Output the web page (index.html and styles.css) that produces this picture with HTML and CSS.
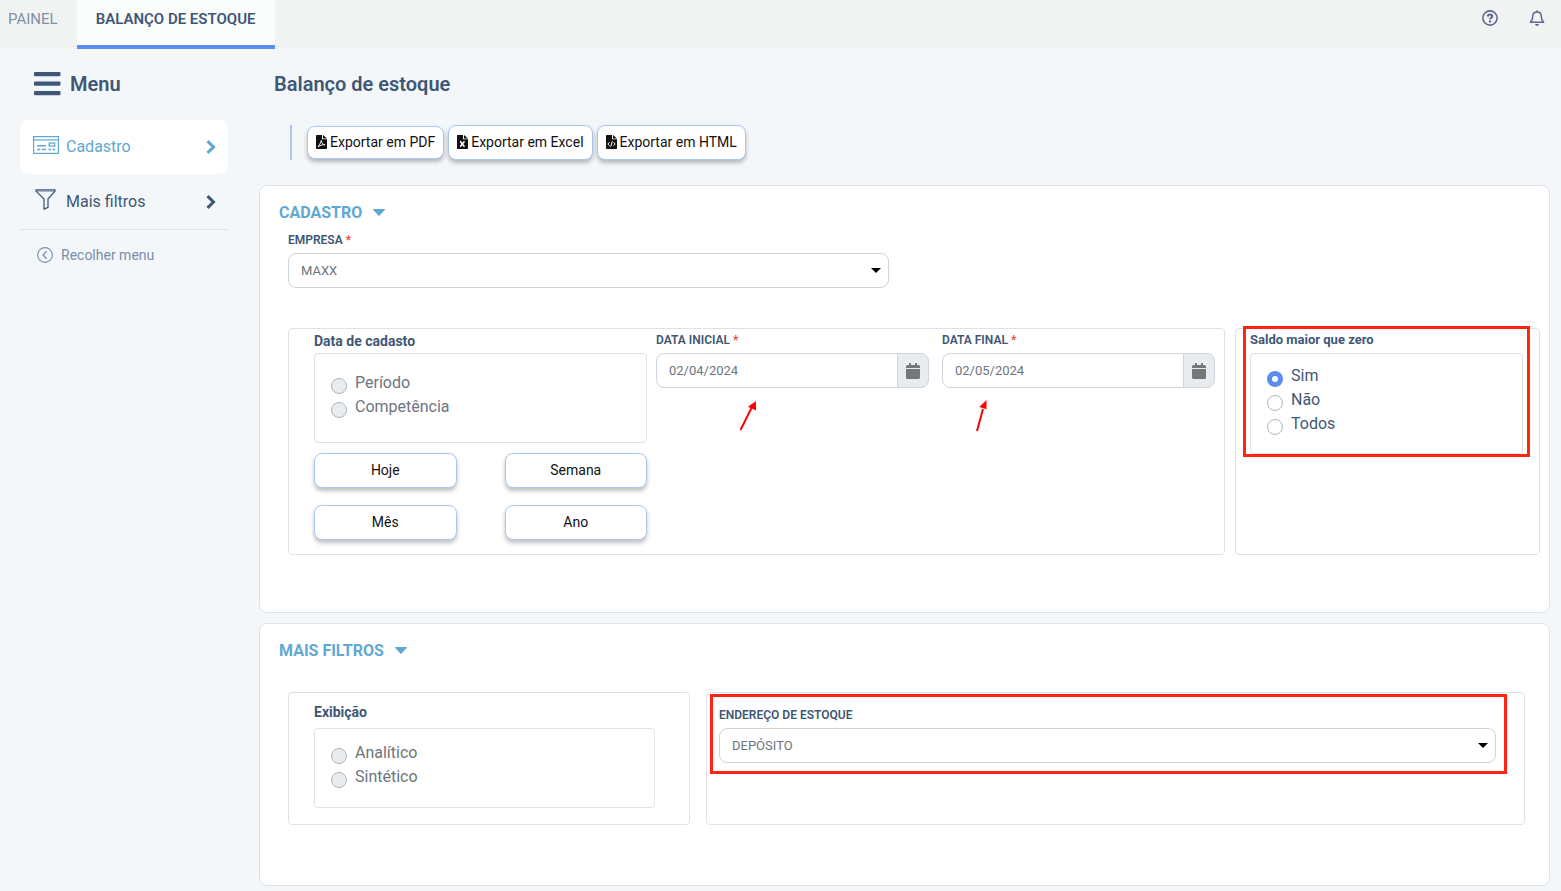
FILE: index.html
```html
<!DOCTYPE html>
<html lang="pt-BR">
<head>
<meta charset="utf-8">
<meta name="viewport" content="width=device-width, initial-scale=1">
<title>Balanço de estoque</title>
<link rel="stylesheet" href="styles.css">
</head>
<body>
<header class="topbar">
  <nav class="tabs">
    <a class="tab" href="#painel">PAINEL</a>
    <a class="tab tab-active" href="#balanco" aria-current="page">BALANÇO DE ESTOQUE</a>
  </nav>
  <div class="top-actions">
    <button class="icon-button" type="button" aria-label="Ajuda">
      <svg width="16" height="16" viewBox="0 0 16 16" fill="none" stroke="currentColor"><circle cx="8" cy="8" r="7.1" stroke-width="1.6"/><path d="M5.700 6.500c.2-1.300 1.100-1.900 2.300-1.900 1.300 0 2.200.7 2.200 1.800 0 1.500-2.100 1.400-2.100 2.900" stroke-width="2"/><circle cx="8.050" cy="11.400" r="1.200" fill="currentColor" stroke="none"/></svg>
    </button>
    <button class="icon-button" type="button" aria-label="Notificações">
      <svg width="16" height="16" viewBox="0 0 16 16" fill="none" stroke="currentColor" stroke-width="1.500" stroke-linejoin="round"><path d="M8 .2v1.600"/><path d="M8 2C5.300 2 3.700 3.900 3.700 6.500c0 3.300-.9 4.500-2.300 5.800h13.200c-1.400-1.300-2.300-2.500-2.300-5.800C12.300 3.900 10.700 2 8 2z"/><path d="M6.100 13.900h3.800c-.1 1.200-.9 2-1.900 2s-1.800-.8-1.900-2z" fill="currentColor" stroke="none"/></svg>
    </button>
  </div>
</header>

<div class="layout">
  <aside class="sidebar">
    <h2 class="menu-title">
      <svg width="27" height="24" viewBox="0 0 27 24" fill="currentColor" aria-hidden="true"><rect y="0" width="26.500" height="4.200" rx="1"/><rect y="9.500" width="26.500" height="4.200" rx="1"/><rect y="19" width="26.500" height="4.200" rx="1"/></svg>
      Menu
    </h2>
    <nav class="side-nav">
      <a class="side-link side-link-active" href="#cadastro">
        <svg class="side-icon" width="26" height="18" viewBox="0 0 26 18" fill="none" stroke="currentColor" aria-hidden="true"><rect x=".6" y=".6" width="24.800" height="16.800" stroke-width="1.200"/><path d="M1 3.900h24" stroke-width="1.200"/><path d="M4 9.700h9M4 13.500h3.500M9 13.500h4M15.500 13.500h2.500M19.500 13.500h2.500" stroke-width="1.400"/><rect x="16.200" y="7" width="5.500" height="3" stroke-width="1.300"/></svg>
        Cadastro
        <svg class="side-arrow" width="10" height="14" viewBox="0 0 10 14" fill="none" stroke="currentColor" stroke-width="3" aria-hidden="true"><path d="M1.500 1.200 7.500 7l-6 5.800"/></svg>
      </a>
      <a class="side-link" href="#mais-filtros">
        <svg class="side-icon" width="26" height="21" viewBox="0 0 26 21" fill="none" stroke="currentColor" stroke-width="1.300" stroke-linejoin="round" aria-hidden="true"><path d="M3 .8h19v1.300l-7 7.900v8.300l-4 1.900V10L3 2.100z"/><path d="M3.500 2.100h18" stroke-width=".7"/></svg>
        Mais filtros
        <svg class="side-arrow" width="10" height="14" viewBox="0 0 10 14" fill="none" stroke="currentColor" stroke-width="3" aria-hidden="true"><path d="M1.500 1.200 7.500 7l-6 5.800"/></svg>
      </a>
    </nav>
    <button class="collapse" type="button">
      <svg width="16" height="16" viewBox="0 0 16 16" fill="none" stroke="currentColor" aria-hidden="true"><circle cx="8" cy="8" r="7.400" stroke-width="1.100"/><path d="M9.600 4.300 6 8l3.600 3.700" stroke-width="1.300"/></svg>
      Recolher menu
    </button>
  </aside>

  <main class="content">
    <h1 class="page-title">Balanço de estoque</h1>
    <div class="toolbar">
      <button class="button export export-pressed" type="button">
        <svg width="11" height="14" viewBox="0 0 11 14" aria-hidden="true"><path d="M0 .8Q0 0 .8 0H6v4.300h5v8.900q0 .8-.8.800H.8Q0 14 0 13.200zM7 0l4 3.400H7z" fill="currentColor"/><path d="M2.200 11.800c.5-1.700 2.500-3 3.100-6.300.2 2.600 1.700 4 3.600 4.300-1.800-.2-4.300.1-6.700 2" fill="none" stroke="#fff" stroke-width="1"/></svg>
        Exportar em PDF
      </button>
      <button class="button export" type="button">
        <svg width="11" height="14" viewBox="0 0 11 14" aria-hidden="true"><path d="M0 .8Q0 0 .8 0H6v4.300h5v8.900q0 .8-.8.800H.8Q0 14 0 13.200zM7 0l4 3.400H7z" fill="currentColor"/><path d="M3.200 6.300l4.300 5.500M7.500 6.300l-4.300 5.500" fill="none" stroke="#fff" stroke-width="1.500"/></svg>
        Exportar em Excel
      </button>
      <button class="button export" type="button">
        <svg width="11" height="14" viewBox="0 0 11 14" aria-hidden="true"><path d="M0 .8Q0 0 .8 0H6v4.300h5v8.900q0 .8-.8.800H.8Q0 14 0 13.200zM7 0l4 3.400H7z" fill="currentColor"/><path d="M3.500 7.200 1.800 9l1.700 1.800M7.500 7.200 9.200 9l-1.700 1.800M6.300 6.200l-1.600 5.600" fill="none" stroke="#fff" stroke-width="1"/></svg>
        Exportar em HTML
      </button>
    </div>

    <section class="card" id="cadastro">
      <h2 class="card-title">CADASTRO <svg width="12" height="7" viewBox="0 0 12 7" fill="currentColor" aria-hidden="true"><path d="M.3 0h11.400q.5.300 0 .9L6.600 6.500q-.6.600-1.200 0L.3.900Q-.2.300.3 0z"/></svg></h2>
      <div class="card-body">
        <div class="field company">
          <label class="label" for="empresa">EMPRESA <span class="required">*</span></label>
          <select class="control select" id="empresa"><option>MAXX</option></select>
        </div>
        <div class="register-grid">
          <div class="panel dates">
            <div class="period">
              <h3 class="group-title" id="data-titulo">Data de cadasto</h3>
              <div class="options" role="radiogroup" aria-labelledby="data-titulo">
                <label class="option"><input type="radio" name="data" disabled>Período</label>
                <label class="option"><input type="radio" name="data" disabled>Competência</label>
              </div>
              <div class="quick-dates">
                <button class="button" type="button">Hoje</button>
                <button class="button" type="button">Semana</button>
                <button class="button" type="button">Mês</button>
                <button class="button" type="button">Ano</button>
              </div>
            </div>
            <div class="field date-field">
              <label class="label" for="data-inicial">DATA INICIAL <span class="required">*</span></label>
              <div class="date-input">
                <input class="control" id="data-inicial" type="text" value="02/04/2024">
                <button class="calendar" type="button" aria-label="Abrir calendário da data inicial"><svg width="14" height="16" viewBox="0 0 14 16" fill="currentColor"><path d="M0 5V3.500Q0 2 1.500 2H3V.5Q3 0 3.500 0h1Q5 0 5 .5V2h4V.5Q9 0 9.500 0h1q.5 0 .5.500V2h1.500Q14 2 14 3.500V5zM0 6h14v8.500q0 1.500-1.500 1.500h-11Q0 16 0 14.500z"/></svg></button>
              </div>
              <svg class="pointer pointer-start" width="18" height="32" viewBox="0 0 18 32" aria-hidden="true"><path d="M1.500 30 12.500 8" stroke="#f00" stroke-width="2"/><path d="M17 1v9.500L9 6.800z" fill="#f00"/></svg>
            </div>
            <div class="field date-field">
              <label class="label" for="data-final">DATA FINAL <span class="required">*</span></label>
              <div class="date-input">
                <input class="control" id="data-final" type="text" value="02/05/2024">
                <button class="calendar" type="button" aria-label="Abrir calendário da data final"><svg width="14" height="16" viewBox="0 0 14 16" fill="currentColor"><path d="M0 5V3.500Q0 2 1.500 2H3V.5Q3 0 3.500 0h1Q5 0 5 .5V2h4V.5Q9 0 9.500 0h1q.5 0 .5.500V2h1.500Q14 2 14 3.500V5zM0 6h14v8.500q0 1.500-1.500 1.500h-11Q0 16 0 14.500z"/></svg></button>
              </div>
              <svg class="pointer pointer-end" width="14" height="32" viewBox="0 0 14 32" aria-hidden="true"><path d="M2 31 8 9" stroke="#f00" stroke-width="2"/><path d="M11.500 0v9.300L4.300 7z" fill="#f00"/></svg>
            </div>
          </div>
          <div class="panel balance">
            <div class="highlight balance-highlight">
              <h3 class="group-title balance-title" id="saldo-titulo">Saldo maior que zero</h3>
              <div class="options options-balance" role="radiogroup" aria-labelledby="saldo-titulo">
                <label class="option"><input type="radio" name="saldo" checked>Sim</label>
                <label class="option"><input type="radio" name="saldo">Não</label>
                <label class="option"><input type="radio" name="saldo">Todos</label>
              </div>
            </div>
          </div>
        </div>
      </div>
    </section>

    <section class="card card-filters" id="mais-filtros">
      <h2 class="card-title">MAIS FILTROS <svg width="12" height="7" viewBox="0 0 12 7" fill="currentColor" aria-hidden="true"><path d="M.3 0h11.400q.5.300 0 .9L6.600 6.500q-.6.600-1.200 0L.3.900Q-.2.300.3 0z"/></svg></h2>
      <div class="filters-grid">
        <div class="panel display">
          <h3 class="group-title" id="exibicao-titulo">Exibição</h3>
          <div class="options options-display" role="radiogroup" aria-labelledby="exibicao-titulo">
            <label class="option"><input type="radio" name="exibicao" disabled>Analítico</label>
            <label class="option"><input type="radio" name="exibicao" disabled>Sintético</label>
          </div>
        </div>
        <div class="panel address">
          <div class="highlight address-highlight">
            <div class="field">
              <label class="label" for="endereco">ENDEREÇO DE ESTOQUE</label>
              <select class="control select" id="endereco"><option>DEPÓSITO</option></select>
            </div>
          </div>
        </div>
      </div>
    </section>
  </main>
</div>
</body>
</html>
```

FILE: styles.css
```css
:root {
  --ink: #3f5775;
  --muted: #7b8da8;
  --blue: #5fa8d3;
  --primary: #5b8def;
  --line: #dee2e6;
  --button-line: #a9c8f0;
}

* { box-sizing: border-box; }

body {
  margin: 0;
  background: #f3f7fa;
  color: var(--ink);
  font-family: Roboto, "Liberation Sans", sans-serif;
  font-size: 16px;
  line-height: 24px;
}

h1, h2, h3 { margin: 0; font-weight: 700; }
a { color: inherit; text-decoration: none; }
button, input, select { font-family: inherit; }
button { cursor: pointer; }
svg { flex: none; }

.topbar {
  display: flex;
  justify-content: space-between;
  height: 49px;
  background: #f1f3f3;
}
.tabs { display: flex; }
.tab {
  padding: 8px 19px 0 8px;
  color: #8090a5;
  font-size: 15px;
  line-height: 22px;
}
.tab-active {
  padding: 8px 19px 0;
  border-bottom: 4px solid var(--primary);
  background: #fafcfb;
  color: var(--ink);
  font-weight: 600;
}
.top-actions {
  display: flex;
  align-items: flex-start;
  gap: 31px;
  padding: 10px 16px 0 0;
}
.icon-button {
  display: flex;
  padding: 0;
  border: 0;
  background: none;
  color: #5f6690;
}

.layout {
  display: grid;
  grid-template-columns: 208px minmax(0, 1fr);
  gap: 31px;
  padding: 20px 11px 5px 20px;
}

.menu-title {
  display: flex;
  align-items: center;
  gap: 9px;
  padding: 0 14px;
  margin-bottom: 21px;
  font-size: 20px;
  font-weight: 600;
  line-height: 30px;
}
.side-nav { border-bottom: 1px solid var(--line); }
.side-link {
  display: flex;
  align-items: center;
  gap: 7px;
  padding: 15px 12px 15px 13px;
  border-radius: 8px;
}
.side-link-active {
  background: #fff;
  color: var(--blue);
}
.side-icon { margin-bottom: 4px; }
.side-arrow { margin-left: auto; }
.collapse {
  display: flex;
  align-items: center;
  gap: 8px;
  margin-top: 15px;
  padding: 0 17px;
  border: 0;
  background: none;
  color: var(--muted);
  font-size: 14px;
  line-height: 20px;
}

.page-title {
  padding: 0 15px;
  font-size: 20px;
  font-weight: 600;
  line-height: 30px;
}
.toolbar {
  display: flex;
  align-items: center;
  gap: 4px;
  height: 35px;
  margin: 26px 0 25px 31px;
  padding-left: 15px;
  border-left: 2px solid var(--button-line);
}
.button {
  height: 35px;
  padding: 0 8px 2px;
  border: 1px solid var(--button-line);
  border-radius: 8px;
  background: #fff;
  box-shadow: 0 3px 4px rgba(0, 0, 0, .25);
  color: #111;
  font-size: 14px;
}
.export {
  display: flex;
  align-items: center;
  gap: 3px;
}
.export-pressed { height: 33px; }

.card {
  padding: 14px 9px 57px 19px;
  border: 1px solid var(--line);
  border-radius: 8px;
  background: #fff;
}
.card-title {
  display: flex;
  align-items: center;
  gap: 11px;
  color: var(--blue);
  font-size: 16px;
  line-height: 25px;
}
.card-body { padding-left: 9px; }
.company { width: 48%; margin: 6px 0 40px; }

.label {
  display: block;
  margin-bottom: 3px;
  font-size: 12px;
  font-weight: 600;
  line-height: 19px;
}
.required { color: #e74c3c; }
.control {
  width: 100%;
  height: 35px;
  padding: 0 12px;
  border: 1px solid #ced4da;
  border-radius: 8px;
  background: #fff;
  color: #6c757d;
  font-size: 13px;
}
.select {
  appearance: none;
  background: #fff url("data:image/svg+xml,%3Csvg xmlns='http://www.w3.org/2000/svg' width='10' height='5'%3E%3Cpath d='M0 0h10L5 5z'/%3E%3C/svg%3E") no-repeat right 7px center;
}

.panel {
  border: 1px solid var(--line);
  border-radius: 4px;
}
.register-grid {
  display: grid;
  grid-template-columns: 937fr 305fr;
  gap: 10px;
}
.dates {
  display: grid;
  grid-template-columns: 342fr 273fr 286fr;
  padding: 2px 9px 14px 25px;
}
.period { margin-right: 9px; }
.group-title {
  margin-bottom: 2px;
  font-size: 14px;
  line-height: 20px;
}
.options {
  min-height: 90px;
  padding: 17px 16px;
  border: 1px solid var(--line);
  border-radius: 4px;
}
.option {
  display: flex;
  align-items: center;
  gap: 8px;
}
.option input {
  appearance: none;
  width: 16px;
  height: 16px;
  margin: 6px 0 0;
  border: 1px solid #adb5bd;
  border-radius: 50%;
  background: #fff;
}
.option input:checked { border: 5px solid var(--primary); }
.option input:disabled { background: #e9ecef; }
.option:has(input:disabled) { color: #6c757d; }

.quick-dates {
  display: grid;
  grid-template-columns: 1fr 1fr;
  gap: 17px 48px;
  margin-top: 10px;
}

.date-field { position: relative; }
.date-field + .date-field { margin-left: 13px; }
.date-input { display: flex; }
.date-input .control {
  min-width: 0;
  border-radius: 8px 0 0 8px;
}
.calendar {
  display: flex;
  align-items: center;
  justify-content: center;
  flex: none;
  width: 32px;
  margin-left: -1px;
  padding: 0;
  border: 1px solid #ced4da;
  border-radius: 0 8px 8px 0;
  background: #e9ecef;
  color: #777;
}
.pointer { position: absolute; }
.pointer-start { top: 69px; left: 83px; }
.pointer-end { top: 69px; left: 33px; }

.highlight { border: 3px solid #ff2414; }
.balance { padding: 0 9px 0 7px; }
.balance-highlight {
  margin-top: -3px;
  padding: 0 4px;
}
.balance-title {
  margin-bottom: 3px;
  font-size: 13px;
  line-height: 21px;
}
.options-balance {
  min-height: 100px;
  padding-top: 10px;
}

.card-filters {
  margin-top: 10px;
  padding-bottom: 60px;
}
.filters-grid {
  display: grid;
  grid-template-columns: 402fr 819fr;
  gap: 16px;
  margin: 29px 15px 0 9px;
}
.display { padding: 9px 34px 16px 25px; }
.display .group-title { margin-bottom: 6px; }
.options-display {
  min-height: 80px;
  padding: 12px 16px;
}
.address { padding: 1px 17px 0 3px; }
.address-highlight { padding: 9px 8px 8px 6px; }
```
